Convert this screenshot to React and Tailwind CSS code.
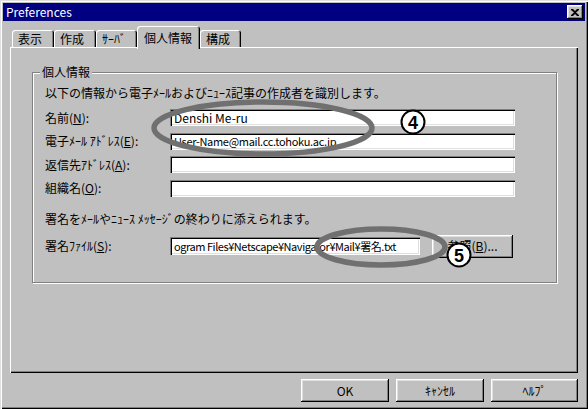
const font = { fontFamily: '"Noto Sans CJK JP", "Liberation Sans", sans-serif' };

const raised =
  'shadow-[inset_-1px_-1px_#000,inset_1px_1px_#fff,inset_-2px_-2px_#808080,inset_2px_2px_#dfdfdf]';
const sunken =
  'shadow-[inset_1px_1px_#808080,inset_2px_2px_#000,inset_-1px_-1px_#fff,inset_-2px_-2px_#dfdfdf]';

const Tab = ({ label, width, active }) => (
  <div
    className={
      active
        ? `${width} h-[23px] -mb-[2px] relative z-10 bg-[#c0c0c0] rounded-tl-[3px] rounded-tr-[3px] shadow-[inset_1px_1px_#fff,inset_-1px_0_#000,inset_-2px_0_#808080] flex items-start pt-[3px] pl-[7px] text-[12px] text-black`
        : `${width} h-[17px] bg-[#c0c0c0] rounded-tl-[3px] rounded-tr-[3px] shadow-[inset_1px_1px_#fff,inset_-1px_0_#000,inset_-2px_0_#808080] flex items-center pl-[6px] pt-[1px] text-[12px] text-black`
    }
  >
    {label}
  </div>
);

const Field = ({ label, value, width = 'w-[345px]', height = 'h-[17px]', text = 'text-[11px]' }) => (
  <div className="flex items-center">
    <div className="w-[125px] text-[12px] leading-[14px] whitespace-nowrap">{label}</div>
    <div
      className={`${width} ${height} bg-white ${sunken} flex items-center pl-[4px] ${text} whitespace-nowrap overflow-hidden`}
    >
      {value}
    </div>
  </div>
);

const Button = ({ children, className = '' }) => (
  <div
    className={`h-[23px] bg-[#c0c0c0] ${raised} flex items-center justify-center text-[12px] text-black ${className}`}
  >
    {children}
  </div>
);

export default function App() {
  return (
    <div
      style={font}
      className="relative w-[588px] h-[409px] bg-[#c0c0c0] p-[3px] flex flex-col shadow-[inset_1px_1px_#dfdfdf,inset_2px_2px_#fff,inset_-1px_-1px_#000,inset_-2px_-2px_#808080] overflow-hidden"
    >
      {/* title bar */}
      <div className="h-[18px] bg-[#000080] flex items-center justify-between pl-[3px] pr-[2px]">
        <span className="text-white text-[12px] leading-none">Preferences</span>
        <div className={`w-[16px] h-[14px] bg-[#c0c0c0] ${raised} flex items-center justify-center`}>
          <svg width="8" height="7" viewBox="0 0 8 7">
            <path d="M0 0h2l2 2 2-2h2v1L5 3.5 8 6v1H6L4 5 2 7H0V6l3-2.5L0 1z" fill="#000" />
          </svg>
        </div>
      </div>

      <div className="flex-1 flex flex-col px-[7px] pt-[5px]">
        {/* tabs */}
        <div className="h-[21px] flex items-end pl-[2px]">
          <Tab label="表示" width="w-[42px]" />
          <Tab label="作成" width="w-[42px]" />
          <Tab label="ｻｰﾊﾞ" width="w-[41px]" />
          <Tab label="個人情報" width="w-[63px]" active />
          <Tab label="構成" width="w-[41px]" />
        </div>

        {/* panel */}
        <div className="w-[568px] h-[326px] bg-[#c0c0c0] shadow-[inset_1px_1px_#fff,inset_-1px_-1px_#000,inset_-2px_-2px_#808080] pl-[22px] pt-[25px]">
          <div className="relative w-[525px] h-[211px] border border-[#808080] shadow-[1px_1px_0_#fff,inset_1px_1px_0_#fff] pl-[12px] pt-[13px]">
            <span className="absolute -top-[8px] left-[7px] bg-[#c0c0c0] px-[2px] text-[12px] leading-[14px]">
              個人情報
            </span>
            <div className="text-[12px] leading-[14px] whitespace-nowrap">
              以下の情報から電子ﾒｰﾙおよびﾆｭｰｽ記事の作成者を識別します。
            </div>
            <div className="mt-[9px] flex flex-col gap-[6.67px]">
              <Field
                label={
                  <>
                    名前(<u>N</u>):
                  </>
                }
                value="Denshi Me-ru"
                text="text-[12px]"
              />
              <Field
                label={
                  <>
                    電子ﾒｰﾙ ｱﾄﾞﾚｽ(<u>E</u>):
                  </>
                }
                value="User-Name@mail.cc.tohoku.ac.jp"
                text="text-[11px] tracking-[-0.3px]"
              />
              <Field
                label={
                  <>
                    返信先ｱﾄﾞﾚｽ(<u>A</u>):
                  </>
                }
                value=""
              />
              <Field
                label={
                  <>
                    組織名(<u>O</u>):
                  </>
                }
                value=""
              />
            </div>
            <div className="mt-[15px] text-[12px] leading-[14px] whitespace-nowrap">
              署名をﾒｰﾙやﾆｭｰｽ ﾒｯｾｰｼﾞの終わりに添えられます。
            </div>
            <div className="mt-[9px] flex items-center">
              <Field
                label={
                  <>
                    署名ﾌｧｲﾙ(<u>S</u>):
                  </>
                }
                value="ogram Files¥Netscape¥Navigator¥Mail¥署名.txt"
                width="w-[250px]"
                height="h-[18px]"
                text="text-[11px] tracking-[-0.45px]"
              />
              <Button className="ml-[12px] w-[81px] h-[18px]">
                参照(<u>B</u>)...
              </Button>
            </div>
          </div>
        </div>

        {/* buttons */}
        <div className="mt-[6px] flex justify-end gap-[7px]">
          <Button className="w-[88px]">OK</Button>
          <Button className="w-[88px]">ｷｬﾝｾﾙ</Button>
          <Button className="w-[87px]">ﾍﾙﾌﾟ</Button>
        </div>
      </div>

      {/* annotations drawn over the dialog */}
      <svg className="absolute inset-0 pointer-events-none" width="588" height="409">
        <ellipse cx="263" cy="128" rx="109" ry="26" fill="none" stroke="#707070" strokeWidth="5.5" />
        <ellipse cx="381" cy="247" rx="64" ry="18" fill="none" stroke="#707070" strokeWidth="5.5" />
        <circle cx="413" cy="122" r="11.5" fill="#fff" stroke="#000" strokeWidth="2" />
        <text x="413" y="128.5" textAnchor="middle" fontSize="18" fontWeight="900" fontFamily="Liberation Sans, sans-serif" fill="#000">
          4
        </text>
        <circle cx="459" cy="255" r="11.5" fill="#fff" stroke="#000" strokeWidth="2" />
        <text x="459" y="261.5" textAnchor="middle" fontSize="18" fontWeight="900" fontFamily="Liberation Sans, sans-serif" fill="#000">
          5
        </text>
      </svg>
    </div>
  );
}
